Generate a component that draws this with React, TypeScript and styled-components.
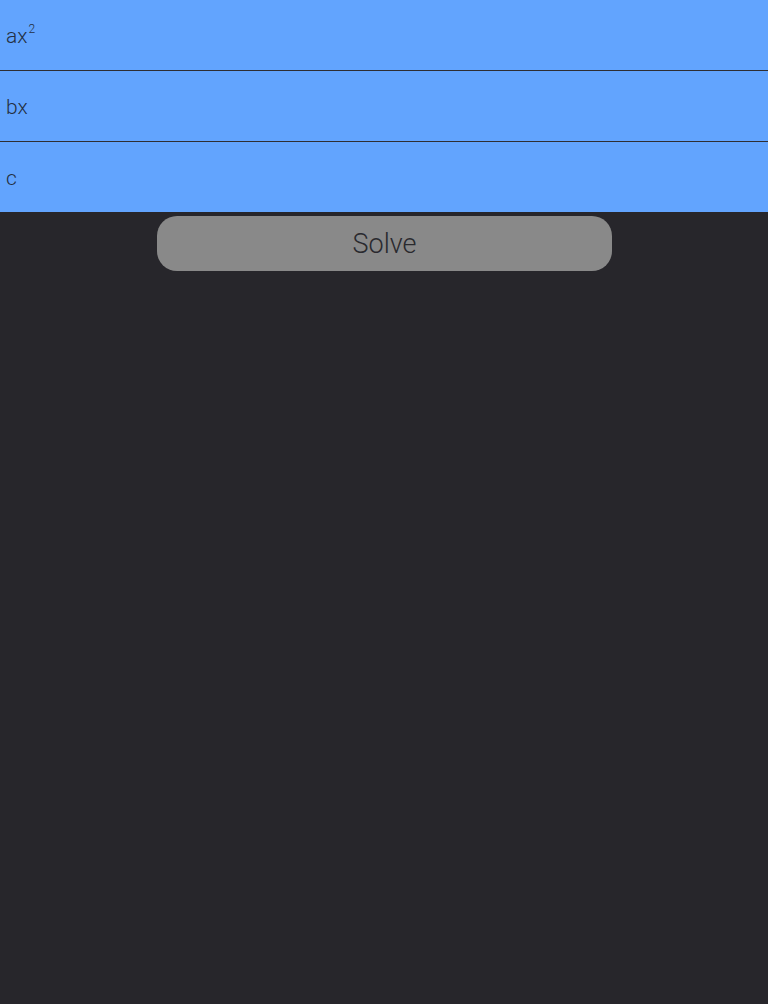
import React from "react";
import styled, { createGlobalStyle } from "styled-components";

const Global = createGlobalStyle`
  html, body { margin: 0; padding: 0; background: #27262b; }
  body { font-family: Roboto, "Liberation Sans", sans-serif; font-weight: 300; }
  #root { min-height: 1004px; }
`;

const Page = styled.div`
  min-height: 1004px;
  background: #27262b;
  display: flex;
  flex-direction: column;
`;

const Fields = styled.div`
  display: flex;
  flex-direction: column;
  background: #62a4fe;
`;

const Field = styled.div<{ $last?: boolean }>`
  display: flex;
  align-items: center;
  padding-left: 6px;
  padding-top: 2px;
  box-sizing: border-box;
  height: ${(p) => (p.$last ? "70px" : "71px")};
  border-bottom: ${(p) => (p.$last ? "none" : "1px solid #2e2e33")};
`;

const Label = styled.span`
  font-size: 21px;
  line-height: 24px;
  color: #243042;
`;

const Sup = styled.sup`
  font-size: 12px;
  vertical-align: 10px;
  line-height: 0;
  margin-left: 1px;
`;

const ButtonRow = styled.div`
  display: flex;
  justify-content: center;
  padding-top: 4px;
`;

const SolveButton = styled.button`
  width: 455px;
  height: 55px;
  margin-left: 1px;
  border: none;
  border-radius: 20px;
  background: #898989;
  color: #2a2a2f;
  font-family: Roboto, "Liberation Sans", sans-serif;
  font-weight: 300;
  font-size: 27px;
  display: flex;
  align-items: center;
  justify-content: center;
  padding: 0;
  cursor: pointer;
`;

export default function App() {
  return (
    <>
      <Global />
      <Page>
        <Fields>
          <Field>
            <Label>
              ax<Sup>2</Sup>
            </Label>
          </Field>
          <Field>
            <Label>bx</Label>
          </Field>
          <Field $last>
            <Label>c</Label>
          </Field>
        </Fields>
        <ButtonRow>
          <SolveButton>Solve</SolveButton>
        </ButtonRow>
      </Page>
    </>
  );
}
